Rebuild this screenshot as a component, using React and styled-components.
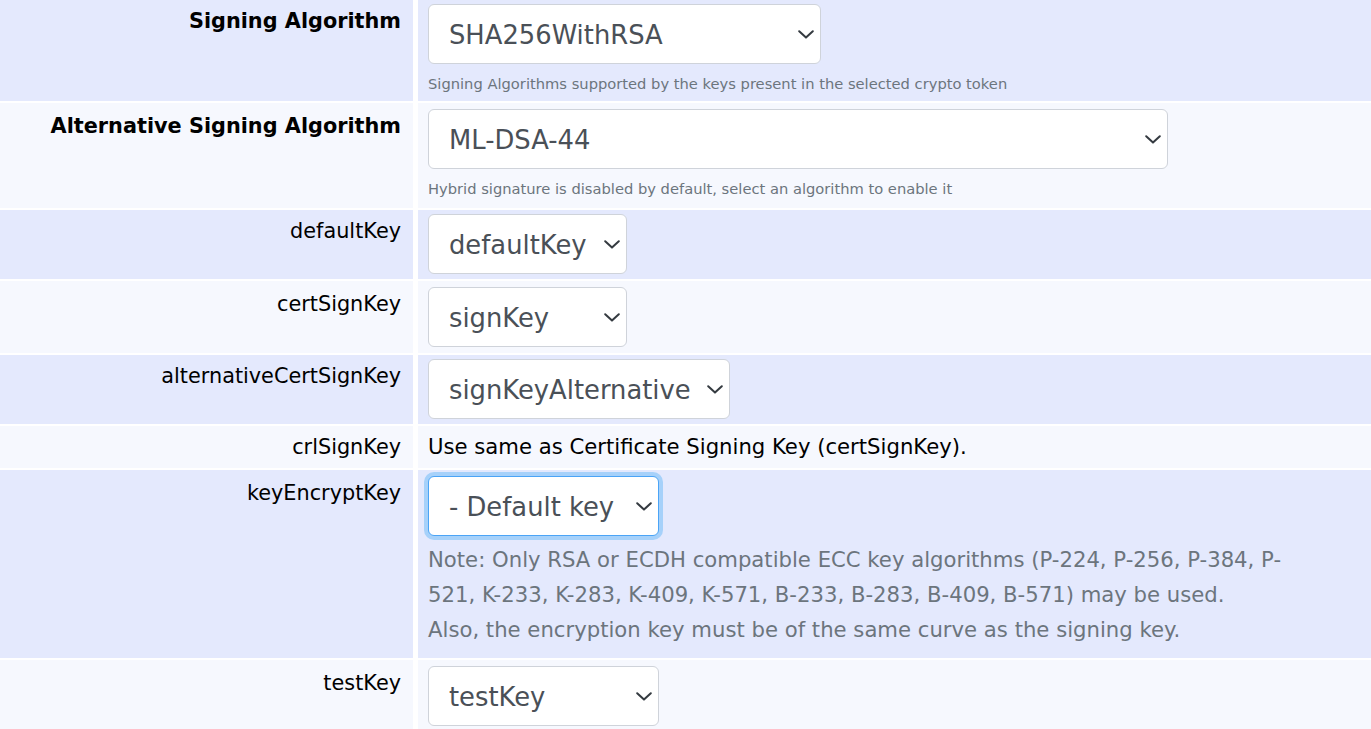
import React from "react";
import styled, { createGlobalStyle, css } from "styled-components";

const Global = createGlobalStyle`
  html, body { margin: 0; padding: 0; background: #ffffff; }
  body { font-family: "DejaVu Sans", Verdana, sans-serif; color: #000; }
`;

const Table = styled.div`
  display: flex;
  flex-direction: column;
  gap: 2px;
  background: #ffffff;
`;

const Row = styled.div`
  display: grid;
  grid-template-columns: 413px 1fr;
  column-gap: 5px;
  --top: ${(p) => p.$top}px;
  --bottom: ${(p) => p.$bottom}px;
  --bg: ${(p) => (p.$alt ? "#f6f8fe" : "#e4e9fd")};
`;

const LabelCell = styled.div`
  background: var(--bg);
  padding: calc(var(--top) + 5px) 12px 0 0;
  text-align: right;
  font-size: 20.8px;
  line-height: 24px;
  color: #000;
  font-weight: ${(p) => (p.$bold ? 700 : 400)};
`;

const ValueCell = styled.div`
  background: var(--bg);
  padding: var(--top) 10px var(--bottom) 10px;
  display: flex;
  flex-direction: column;
  align-items: flex-start;
`;

const SelectWrap = styled.div`
  position: relative;
  width: ${(p) => p.$width}px;
  height: 60px;
`;

const NativeSelect = styled.select`
  appearance: none;
  -webkit-appearance: none;
  box-sizing: border-box;
  width: 100%;
  height: 100%;
  margin: 0;
  padding: 2px 26px 0 20px;
  background: #ffffff;
  border: 1px solid #cfd3da;
  border-radius: 6px;
  font-family: "DejaVu Sans", Verdana, sans-serif;
  font-size: 25.8px;
  color: #4a5057;
  outline: none;
  ${(p) =>
    p.$focused &&
    css`
      border-color: #4ba4f6;
      box-shadow: 0 0 0 4px #a6d1fa;
    `}
`;

const Chevron = styled.svg`
  position: absolute;
  right: 7px;
  top: 50%;
  width: 16px;
  height: 9px;
  margin-top: -4.5px;
  pointer-events: none;
`;

const HelpText = styled.div`
  margin-top: 9px;
  font-size: 14.7px;
  line-height: 22px;
  color: #6c757d;
`;

const Note = styled.div`
  margin-top: 6px;
  font-size: 21.2px;
  line-height: 35px;
  color: #6c757d;
`;

const NoteLine = styled.span`
  display: block;
  white-space: nowrap;
`;

const PlainValue = styled.div`
  padding-top: 5px;
  font-size: 21.2px;
  line-height: 24px;
  color: #000;
`;

function Select({ width, value, focused }) {
  return (
    <SelectWrap $width={width}>
      <NativeSelect $focused={focused} defaultValue={value}>
        <option value={value}>{value}</option>
      </NativeSelect>
      <Chevron viewBox="0 0 16 9" aria-hidden="true">
        <path
          d="M1.2 1.2 L8 7.6 L14.8 1.2"
          fill="none"
          stroke="#343a40"
          strokeWidth="2"
          strokeLinecap="round"
          strokeLinejoin="round"
        />
      </Chevron>
    </SelectWrap>
  );
}

export default function App() {
  return (
    <>
      <Global />
      <Table>
        <Row $top={4} $bottom={6}>
          <LabelCell $bold>Signing Algorithm</LabelCell>
          <ValueCell>
            <Select width={393} value="SHA256WithRSA" />
            <HelpText>
              Signing Algorithms supported by the keys present in the selected crypto token
            </HelpText>
          </ValueCell>
        </Row>
        <Row $alt $top={6} $bottom={8}>
          <LabelCell $bold>Alternative Signing Algorithm</LabelCell>
          <ValueCell>
            <Select width={740} value="ML-DSA-44" />
            <HelpText>
              Hybrid signature is disabled by default, select an algorithm to enable it
            </HelpText>
          </ValueCell>
        </Row>
        <Row $top={4} $bottom={5}>
          <LabelCell>defaultKey</LabelCell>
          <ValueCell>
            <Select width={199} value="defaultKey" />
          </ValueCell>
        </Row>
        <Row $alt $top={6} $bottom={6}>
          <LabelCell>certSignKey</LabelCell>
          <ValueCell>
            <Select width={199} value="signKey" />
          </ValueCell>
        </Row>
        <Row $top={4} $bottom={5}>
          <LabelCell>alternativeCertSignKey</LabelCell>
          <ValueCell>
            <Select width={302} value="signKeyAlternative" />
          </ValueCell>
        </Row>
        <Row $alt $top={4} $bottom={9}>
          <LabelCell>crlSignKey</LabelCell>
          <ValueCell>
            <PlainValue>Use same as Certificate Signing Key (certSignKey).</PlainValue>
          </ValueCell>
        </Row>
        <Row $top={6} $bottom={11}>
          <LabelCell>keyEncryptKey</LabelCell>
          <ValueCell>
            <Select width={231} value="- Default key" focused />
            <Note>
              <NoteLine>
                Note: Only RSA or ECDH compatible ECC key algorithms (P-224, P-256, P-384, P-
              </NoteLine>
              <NoteLine>
                521, K-233, K-283, K-409, K-571, B-233, B-283, B-409, B-571) may be used.
              </NoteLine>
              <NoteLine>
                Also, the encryption key must be of the same curve as the signing key.
              </NoteLine>
            </Note>
          </ValueCell>
        </Row>
        <Row $alt $top={6} $bottom={6}>
          <LabelCell>testKey</LabelCell>
          <ValueCell>
            <Select width={231} value="testKey" />
          </ValueCell>
        </Row>
      </Table>
    </>
  );
}
